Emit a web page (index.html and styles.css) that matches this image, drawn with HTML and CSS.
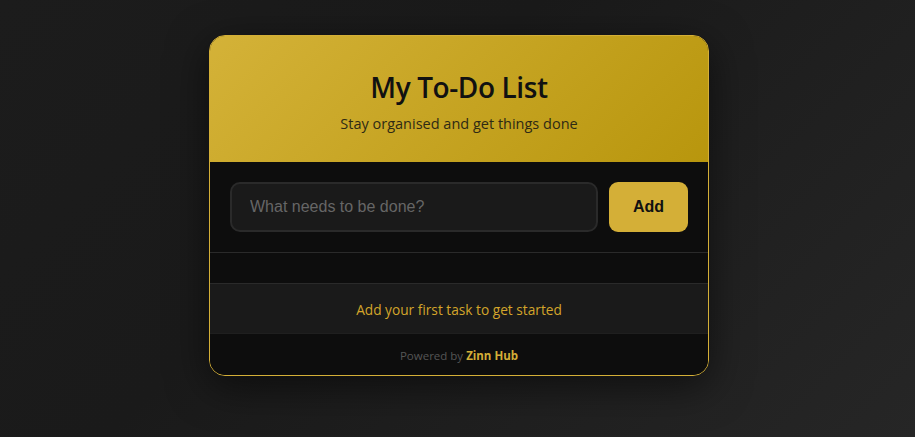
FILE: index.html
```html
<!DOCTYPE html>
<html lang="en">
<head>
<meta charset="utf-8">
<title>My To-Do List</title>
<link rel="stylesheet" href="styles.css">
</head>
<body>
<main class="card">
  <header class="card-header">
    <h1 class="title">My To-Do List</h1>
    <p class="subtitle">Stay organised and get things done</p>
  </header>
  <form class="entry">
    <input class="entry-input" type="text" placeholder="What needs to be done?">
    <button class="entry-btn" type="button">Add</button>
  </form>
  <ul class="list"></ul>
  <div class="empty">Add your first task to get started</div>
  <footer class="footer">Powered by <strong class="brand">Zinn Hub</strong></footer>
</main>
</body>
</html>
```
FILE: styles.css
```css
* { box-sizing: border-box; }
html, body { height: 100%; }
body {
  margin: 0;
  padding: 35px 0 0 3px;
  background: linear-gradient(135deg, #1c1c1c 0%, #1a1a1a 40%, #262626 100%);
  font-family: "Open Sans", "Noto Sans", sans-serif;
  display: flex;
  justify-content: center;
  align-items: flex-start;
}
.card {
  width: 500px;
  border: 1px solid #d4af37;
  border-radius: 16px;
  overflow: hidden;
  background: #0d0d0d;
  box-shadow: 0 10px 40px rgba(0, 0, 0, 0.55);
}
.card-header {
  height: 126px;
  background: linear-gradient(135deg, #d4b238 0%, #b8960d 100%);
  text-align: center;
  padding-top: 31px;
}
.title {
  margin: 0;
  font-size: 28px;
  font-weight: 600;
  line-height: 40px;
  color: #111;
  letter-spacing: -0.4px;
}
.subtitle {
  margin: 7px 0 0;
  font-size: 14.5px;
  line-height: 20px;
  color: #2e2a14;
}
.entry {
  margin: 0;
  display: flex;
  gap: 11px;
  padding: 20px;
  border-bottom: 1px solid #2a2a2a;
}
.entry-input {
  flex: 1;
  height: 50px;
  border: 2px solid #2a2a2a;
  border-radius: 10px;
  background: #1a1a1a;
  padding: 0 18px;
  font-family: "Liberation Sans", Arial, sans-serif;
  font-size: 16px;
  color: #ddd;
  outline: none;
}
.entry-input::placeholder { color: #666; }
.entry-btn {
  width: 79px;
  height: 50px;
  border: none;
  border-radius: 9px;
  background: #d4af37;
  color: #111;
  font-family: "Liberation Sans", Arial, sans-serif;
  font-size: 16px;
  font-weight: 700;
}
.list {
  margin: 0;
  padding: 0;
  list-style: none;
  height: 31px;
  border-bottom: 1px solid #2a2a2a;
}
.empty {
  height: 50px;
  background: #1a1a1a;
  color: #d4a52a;
  font-size: 13.7px;
  text-align: center;
  line-height: 52px;
  border-bottom: 1px solid #1f1f1f;
}
.footer {
  height: 41px;
  background: #0d0d0d;
  text-align: center;
  font-size: 11.5px;
  line-height: 43px;
  color: #555;
}
.brand { color: #d4af37; font-weight: 700; }
```
